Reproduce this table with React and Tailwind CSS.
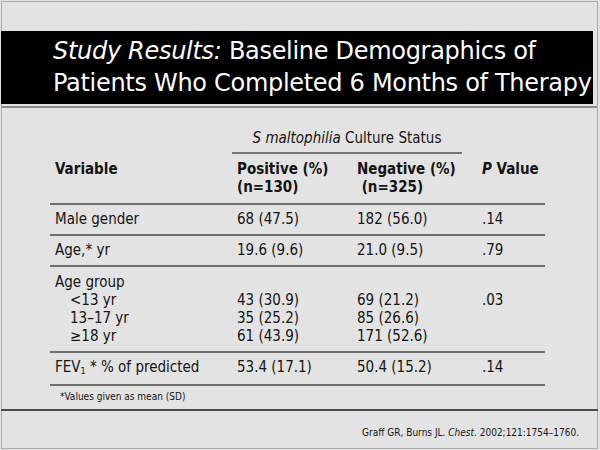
import React from "react";

const rows = [
  { v: "Male gender", p: "68 (47.5)", n: "182 (56.0)", pv: ".14" },
  { v: "Age,* yr", p: "19.6 (9.6)", n: "21.0 (9.5)", pv: ".79" },
];

const cols = "grid grid-cols-[182px_120px_125px_68px] w-[495px]";

const Cell = ({ children }) => <div className="pl-[5px]">{children}</div>;

const Rule = () => <div className="h-[2px] bg-[#707070] w-[495px]" />;

export default function App() {
  return (
    <div className="w-[600px] h-[450px] bg-[#e3e3e3] text-[#141414] flex flex-col overflow-hidden font-['DejaVu_Sans_Condensed','DejaVu_Sans',sans-serif] font-stretch-condensed">
      <div className="flex-1 flex flex-col border-l border-r border-t border-b border-[#a9a9a9] ml-px mr-[2px] mt-px mb-px">
        <div className="h-[29px]" />
        <div className="h-[73px] -ml-px mr-[4px] bg-black text-white pl-[52px] pt-[4px] text-[24px] leading-[32px] tracking-[-0.3px] font-['DejaVu_Sans',sans-serif] font-stretch-normal">
          <div>
            <span className="italic">Study Results:</span> Baseline Demographics of
          </div>
          <div>Patients Who Completed 6 Months of Therapy</div>
        </div>
        <div className="h-[2px]" />
        <div className="h-[2px] bg-[#8a8a8a]" />
        <div className="flex-1 pl-[48px] pt-[21px] text-[15px] leading-[18px]">
          <div className="ml-[182px] w-[230px] text-center pb-[5px] border-b-2 border-[#777]">
            <span className="italic">S maltophilia</span> Culture Status
          </div>
          <div className={cols + " font-bold pt-[6px] pb-[7px]"}>
            <Cell>Variable</Cell>
            <Cell>
              Positive (%)
              <br />
              (n=130)
            </Cell>
            <Cell>
              Negative (%)
              <br />
              &nbsp;(n=325)
            </Cell>
            <Cell>
              <span className="italic">P</span> Value
            </Cell>
          </div>
          <Rule />
          {rows.map((r) => (
            <React.Fragment key={r.v}>
              <div className={cols + " pt-[5px] pb-[6px]"}>
                <Cell>{r.v}</Cell>
                <Cell>{r.p}</Cell>
                <Cell>{r.n}</Cell>
                <Cell>{r.pv}</Cell>
              </div>
              <Rule />
            </React.Fragment>
          ))}
          <div className={cols + " pt-[6px] pb-[6px]"}>
            <Cell>
              Age group
              <div className="pl-[15px]">
                &lt;13 yr
                <br />
                13–17 yr
                <br />≥18 yr
              </div>
            </Cell>
            <Cell>
              <br />
              43 (30.9)
              <br />
              35 (25.2)
              <br />
              61 (43.9)
            </Cell>
            <Cell>
              <br />
              69 (21.2)
              <br />
              85 (26.6)
              <br />
              171 (52.6)
            </Cell>
            <Cell>
              <br />
              .03
            </Cell>
          </div>
          <Rule />
          <div className={cols + " pt-[5px] pb-[8px]"}>
            <Cell>
              FEV<sub className="text-[9px]">1</sub> * % of predicted
            </Cell>
            <Cell>53.4 (17.1)</Cell>
            <Cell>50.4 (15.2)</Cell>
            <Cell>.14</Cell>
          </div>
          <Rule />
          <div className="pl-[10px] pt-[5px] text-[10px] leading-[12px]">*Values given as mean (SD)</div>
        </div>
        <div className="h-[2px] bg-[#4a4a4a] -mx-px" />
        <div className="h-[37px] flex items-center justify-end pr-[18px] pt-[6px] text-[10px]">
          <span>
            Graff GR, Burns JL. <span className="italic">Chest</span>. 2002;121:1754–1760.
          </span>
        </div>
      </div>
    </div>
  );
}
